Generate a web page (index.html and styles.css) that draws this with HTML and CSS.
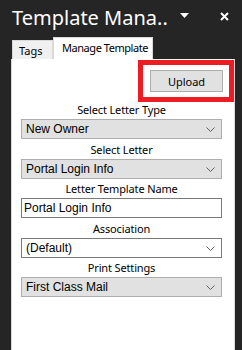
FILE: index.html
```html
<!DOCTYPE html>
<html lang="en">

<head>
    <meta charset="UTF-8">
    <meta name="viewport" content="width=device-width, initial-scale=1.0">
    <title>Template Manager</title>
    <link rel="stylesheet" href="styles.css">
</head>

<body>
    <div class="pane">
        <div class="header">
            <span class="title">Template Mana..</span>
            <svg class="caret" width="9" height="5" viewBox="0 0 9 5">
                <path d="M0 0 L9 0 L4.5 5 Z" fill="#ffffff" />
            </svg>
            <svg class="close" width="9" height="9" viewBox="0 0 9 9">
                <path d="M1 1 L8 8 M8 1 L1 8" stroke="#ffffff" stroke-width="2" />
            </svg>
        </div>

        <div class="tabs">
            <div class="tab">Tags</div>
            <div class="tab active">Manage Template</div>
        </div>

        <div class="panel">
            <div class="upload-row">
                <div class="highlight">
                    <button class="upload">Upload</button>
                </div>
            </div>

            <div class="field first">
                <label>Select Letter Type</label>
                <div class="combo">New Owner<svg class="chev" width="9" height="5" viewBox="0 0 9 5"><path d="M0.5 0.5 L4.5 4.5 L8.5 0.5" fill="none" stroke="#606060" /></svg></div>
            </div>

            <div class="field">
                <label>Select Letter</label>
                <div class="combo">Portal Login Info<svg class="chev" width="9" height="5" viewBox="0 0 9 5"><path d="M0.5 0.5 L4.5 4.5 L8.5 0.5" fill="none" stroke="#606060" /></svg></div>
            </div>

            <div class="field">
                <label>Letter Template Name</label>
                <div class="textbox">Portal Login Info</div>
            </div>

            <div class="field">
                <label>Association</label>
                <div class="combo white">(Default)<svg class="chev" width="9" height="5" viewBox="0 0 9 5"><path d="M0.5 0.5 L4.5 4.5 L8.5 0.5" fill="none" stroke="#606060" /></svg></div>
            </div>

            <div class="field">
                <label>Print Settings</label>
                <div class="combo">First Class Mail<svg class="chev" width="9" height="5" viewBox="0 0 9 5"><path d="M0.5 0.5 L4.5 4.5 L8.5 0.5" fill="none" stroke="#606060" /></svg></div>
            </div>
        </div>
    </div>
</body>

</html>
```

FILE: styles.css
```css
body {
    margin: 0;
    background: #252526;
    font-family: 'Noto Sans', 'Open Sans', sans-serif;
    width: 242px;
    height: 350px;
    overflow: hidden;
}

.pane {
    display: flex;
    flex-direction: column;
    height: 350px;
}

.header {
    height: 37px;
    display: flex;
    align-items: center;
    color: #ffffff;
}

.title {
    font-family: 'Noto Sans', sans-serif;
    font-size: 20px;
    font-weight: 400;
    margin-left: 12px;
    margin-top: -2px;
    width: 168px;
    white-space: nowrap;
}

.caret {
    margin-top: -6px;
}

.close {
    margin-left: 31px;
    margin-top: -4px;
}

.tabs {
    display: flex;
    align-items: flex-end;
    padding-left: 12px;
    height: 22px;
}

.tab {
    font-size: 11px;
    height: 19px;
    line-height: 20px;
    padding: 0 6px;
    background: #f0f0f0;
    border: 1px solid #d9d9d9;
    border-bottom: none;
    color: #000;
    box-sizing: border-box;
    width: 41px;
    white-space: nowrap;
}

.tab.active {
    background: #ffffff;
    height: 22px;
    line-height: 20px;
    width: 100px;
    padding: 0 7px 0 8px;
    border-color: #dadada;
    letter-spacing: -0.45px;
}

.panel {
    flex: 1;
    background: #ffffff;
    margin: 0 7px 0 11px;
    border-left: 1px solid #d9d9d9;
    border-right: 1px solid #d9d9d9;
    padding: 0 12px 0 9px;
}

.upload-row {
    display: flex;
    justify-content: flex-end;
    margin-right: -12px;
    padding-top: 1px;
}

.highlight {
    border: 5px solid #ec1c24;
    padding: 5px 6px 5px 7px;
    width: 73px;
}

.upload {
    display: block;
    width: 73px;
    height: 22px;
    background: #e1e1e1;
    border: 1px solid #adadad;
    font-family: 'Noto Sans', sans-serif;
    font-size: 11px;
    color: #000;
    padding: 0;
}

.field {
    display: flex;
    flex-direction: column;
    margin-top: 2.5px;
}

.field.first {
    margin-top: 0;
}

.field label {
    font-size: 11px;
    line-height: 16px;
    text-align: center;
    margin-bottom: 1px;
    color: #000;
    letter-spacing: -0.15px;
}

.combo,
.textbox {
    position: relative;
    height: 20px;
    box-sizing: border-box;
    font-family: 'Liberation Sans', Arial, sans-serif;
    font-size: 12px;
    line-height: 18px;
    padding-left: 4px;
    color: #000;
}

.combo {
    background: #e1e1e1;
    border: 1px solid #adadad;
}

.combo.white {
    background: #ffffff;
    border-color: #7a7a7a;
}

.textbox {
    background: #ffffff;
    border: 1px solid #7a7a7a;
    padding-left: 2px;
}

.chev {
    position: absolute;
    right: 6px;
    top: 7px;
}
```
